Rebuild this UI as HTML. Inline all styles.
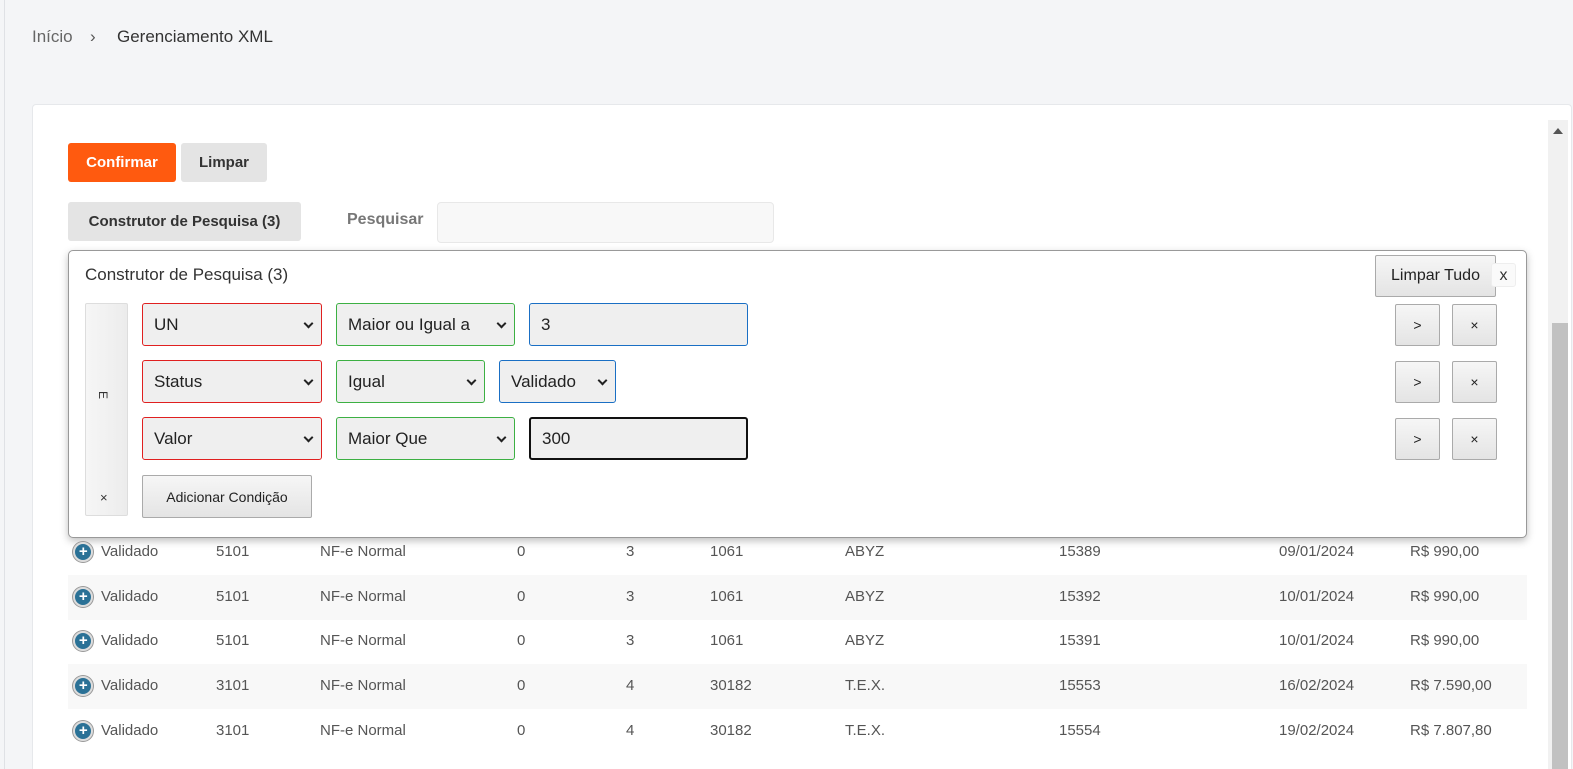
<!DOCTYPE html>
<html style="width:1573px;height:769px;overflow:hidden"><head><style>
*{box-sizing:border-box;margin:0;padding:0}
body{width:1573px;height:769px;overflow:hidden;background:#f4f5f7;font-family:"Liberation Sans",sans-serif;position:relative}
.a{position:absolute}
.bc{top:27px;font-size:17px;color:#333}
.card{left:32px;top:104px;width:1540px;height:665px;background:#fff;border:1px solid #e6e8eb;border-bottom:none;border-radius:4px 4px 0 0}
.btn{position:absolute;border-radius:3px;font-size:15px;font-weight:bold;display:flex;align-items:center;justify-content:center}
.sel{position:absolute;height:43px;background:#efefef;border-radius:3px;font-size:17px;color:#222;padding-left:11px;display:flex;align-items:center}
.sel .c{position:absolute;right:9px;top:16px;border-right:2px solid #222;border-bottom:2px solid #222;transform:rotate(45deg);width:7px;height:7px}
.r{border:1px solid #e02020}.g{border:1px solid #3cb043}.b{border:1px solid #1a6fc4}
.gb{position:absolute;background:linear-gradient(#f6f6f6,#e4e4e4);border:1px solid #aaa;border-radius:2px;font-size:14px;color:#222;display:flex;align-items:center;justify-content:center}
.row{position:absolute;left:68px;width:1459px;height:45px;font-size:15px;color:#555}
.row span{position:absolute;top:13px}
.ic{position:absolute;left:5px;top:12px;width:20px;height:20px;border-radius:50%;background:#2a7196;border:2px solid #ddd;box-shadow:0 0 0 1px #999;color:#fff;font-size:15px;font-weight:bold;line-height:15px;text-align:center}
</style></head><body>
<div class="a" style="left:4px;top:0;width:1px;height:769px;background:#dfe1e5"></div>
<div class="a bc" style="left:32px;color:#666">Início</div>
<div class="a bc" style="left:90px;color:#555">›</div>
<div class="a bc" style="left:117px">Gerenciamento XML</div>
<div class="a card"></div>
<div class="a" style="left:1548px;top:120px;width:20px;height:649px;background:#f1f1f1"></div>
<div class="a" style="left:1553px;top:128px;width:0;height:0;border-left:5px solid transparent;border-right:5px solid transparent;border-bottom:6px solid #555"></div>
<div class="a" style="left:1552px;top:323px;width:16px;height:446px;background:#c1c1c1"></div>
<div class="btn" style="left:68px;top:143px;width:108px;height:39px;background:#ff5a0f;color:#fff">Confirmar</div>
<div class="btn" style="left:181px;top:143px;width:86px;height:39px;background:#e4e4e4;color:#333">Limpar</div>
<div class="btn" style="left:68px;top:202px;width:233px;height:39px;background:#e4e4e4;color:#333">Construtor de Pesquisa (3)</div>
<div class="a" style="left:347px;top:211px;font-size:16px;font-weight:bold;color:#777">Pesquisar</div>
<div class="a" style="left:437px;top:202px;width:337px;height:41px;background:#f8f8f8;border:1px solid #e8e8e8;border-radius:4px"></div>

<div class="a" style="left:68px;top:250px;width:1459px;height:288px;background:#fff;border:1px solid #999;border-radius:5px;box-shadow:0 3px 8px rgba(0,0,0,.25)"></div>
<div class="a" style="left:85px;top:265px;font-size:17px;color:#333">Construtor de Pesquisa (3)</div>
<div class="gb" style="left:1375px;top:255px;width:121px;height:42px;font-size:16px">Limpar Tudo</div>
<div class="a" style="left:1491px;top:263px;width:25px;height:24px;background:#fafafa;border:1px solid #eee;border-radius:3px;font-size:16px;color:#333;text-align:center;line-height:24px">x</div>
<div class="gb" style="left:85px;top:303px;width:43px;height:213px;border-color:#ddd;background:linear-gradient(90deg,#f6f6f6,#ececec)"></div>
<div class="a" style="left:99px;top:388px;font-size:12px;transform:rotate(90deg);color:#333">E</div>
<div class="a" style="left:100px;top:490px;font-size:13px;color:#333">×</div>

<div class="sel r" style="left:142px;top:303px;width:180px">UN<i class="c"></i></div>
<div class="sel g" style="left:336px;top:303px;width:179px">Maior ou Igual a<i class="c"></i></div>
<div class="sel b" style="left:529px;top:303px;width:219px">3</div>
<div class="sel r" style="left:142px;top:360px;width:180px">Status<i class="c"></i></div>
<div class="sel g" style="left:336px;top:360px;width:149px">Igual<i class="c"></i></div>
<div class="sel b" style="left:499px;top:360px;width:117px">Validado<i class="c"></i></div>
<div class="sel r" style="left:142px;top:417px;width:180px">Valor<i class="c"></i></div>
<div class="sel g" style="left:336px;top:417px;width:179px">Maior Que<i class="c"></i></div>
<div class="sel" style="left:529px;top:417px;width:219px;border:2px solid #111">300</div>
<div class="gb" style="left:142px;top:475px;width:170px;height:43px">Adicionar Condição</div>
<div class="gb" style="left:1395px;top:304px;width:45px;height:42px">&gt;</div>
<div class="gb" style="left:1452px;top:304px;width:45px;height:42px">×</div>
<div class="gb" style="left:1395px;top:361px;width:45px;height:42px">&gt;</div>
<div class="gb" style="left:1452px;top:361px;width:45px;height:42px">×</div>
<div class="gb" style="left:1395px;top:418px;width:45px;height:42px">&gt;</div>
<div class="gb" style="left:1452px;top:418px;width:45px;height:42px">×</div>

<div class="row" style="top:530px"><i class="ic">+</i><span style="left:33px">Validado</span><span style="left:148px">5101</span><span style="left:252px">NF-e Normal</span><span style="left:449px">0</span><span style="left:558px">3</span><span style="left:642px">1061</span><span style="left:777px">ABYZ</span><span style="left:991px">15389</span><span style="left:1211px">09/01/2024</span><span style="left:1342px">R$ 990,00</span></div>
<div class="row" style="top:575px;background:#f8f8f8"><i class="ic">+</i><span style="left:33px">Validado</span><span style="left:148px">5101</span><span style="left:252px">NF-e Normal</span><span style="left:449px">0</span><span style="left:558px">3</span><span style="left:642px">1061</span><span style="left:777px">ABYZ</span><span style="left:991px">15392</span><span style="left:1211px">10/01/2024</span><span style="left:1342px">R$ 990,00</span></div>
<div class="row" style="top:619px"><i class="ic">+</i><span style="left:33px">Validado</span><span style="left:148px">5101</span><span style="left:252px">NF-e Normal</span><span style="left:449px">0</span><span style="left:558px">3</span><span style="left:642px">1061</span><span style="left:777px">ABYZ</span><span style="left:991px">15391</span><span style="left:1211px">10/01/2024</span><span style="left:1342px">R$ 990,00</span></div>
<div class="row" style="top:664px;background:#f8f8f8"><i class="ic">+</i><span style="left:33px">Validado</span><span style="left:148px">3101</span><span style="left:252px">NF-e Normal</span><span style="left:449px">0</span><span style="left:558px">4</span><span style="left:642px">30182</span><span style="left:777px">T.E.X.</span><span style="left:991px">15553</span><span style="left:1211px">16/02/2024</span><span style="left:1342px">R$ 7.590,00</span></div>
<div class="row" style="top:709px"><i class="ic">+</i><span style="left:33px">Validado</span><span style="left:148px">3101</span><span style="left:252px">NF-e Normal</span><span style="left:449px">0</span><span style="left:558px">4</span><span style="left:642px">30182</span><span style="left:777px">T.E.X.</span><span style="left:991px">15554</span><span style="left:1211px">19/02/2024</span><span style="left:1342px">R$ 7.807,80</span></div>
</body></html>
